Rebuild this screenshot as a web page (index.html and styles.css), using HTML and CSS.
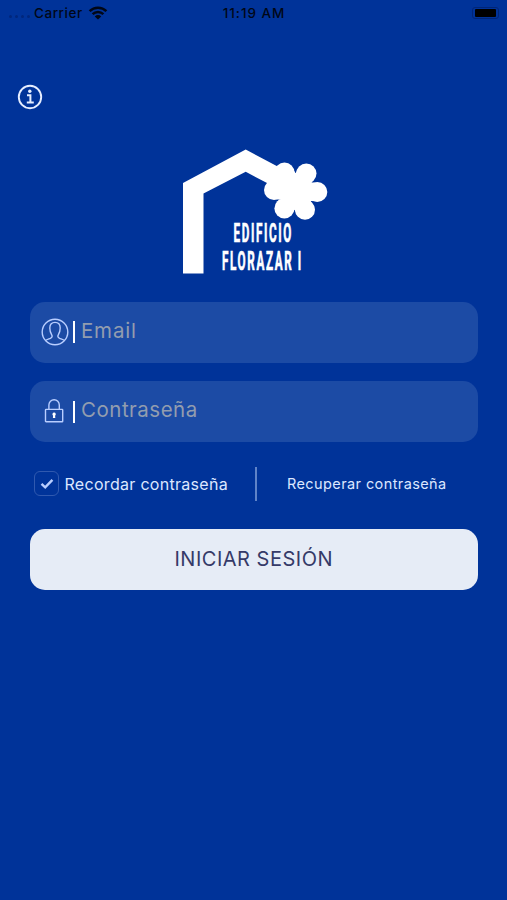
FILE: index.html
```
<!DOCTYPE html>
<html lang="es">
<head>
  <meta charset="UTF-8">
  <title>Edificio Florazar I</title>
  <link rel="stylesheet" href="styles.css">
</head>
<body>
  <div class="status-bar">
    <div class="carrier">
      <span class="signal"><i></i><i></i><i></i><i></i></span>
      <span class="carrier-name">Carrier</span>
      <svg class="wifi" width="20" height="14" viewBox="0 0 20 14">
        <path d="M1.6 5.2a12 12 0 0 1 16.8 0M4.6 8.2a7.8 7.8 0 0 1 10.8 0" fill="none" stroke="#000716" stroke-width="2.5"/>
        <path d="M10 13.6 6.8 10.4a4.6 4.6 0 0 1 6.4 0z" fill="#000716"/>
      </svg>
    </div>
    <div class="time">11:19 AM</div>
    <div class="battery"><span></span></div>
  </div>

  <div class="top">
    <svg class="info" width="26" height="26" viewBox="0 0 26 26" fill="none" stroke="#e6eeff">
      <circle cx="13" cy="13" r="11.2" stroke-width="1.9"/>
      <circle cx="12.8" cy="7.3" r="1.7" fill="#e6eeff" stroke="none"/>
      <path d="M10 11.2h3.4v7.2M9.8 18.6h7" stroke-width="2"/>
    </svg>
  </div>

  <svg class="logo" width="146" height="126" viewBox="0 0 146 126" fill="#fff">
    <path d="M0 124.5V34L62.7 .5 106 23.6 98 41.3 62.7 22.8 20.5 44.5V124.5z"/>
    <!-- flower: round petal tips joined to the centre -->
    <g>
      <circle cx="112" cy="42" r="16"/>
      <path d="M112 42 101.5 23.5M112 42 123.3 24.6M112 42 134.3 43M112 42 122 60.8M112 42 101.4 59.4M112 42 91 41" fill="none" stroke="#fff" stroke-width="18.5"/>
      <circle cx="101.5" cy="23.5" r="10"/>
      <circle cx="123.3" cy="24.6" r="10.2"/>
      <circle cx="134.3" cy="43" r="10"/>
      <circle cx="122" cy="60.8" r="10"/>
      <circle cx="101.4" cy="59.4" r="10"/>
      <circle cx="91" cy="41" r="10"/>
    </g>
    <g class="logo-text">
      <text transform="translate(50.5 92.7) scale(.45 1)">EDIFICIO</text>
      <text transform="translate(39 121) scale(.45 1)">FLORAZAR I</text>
    </g>
  </svg>

  <div class="login">
    <div class="field">
      <svg width="28" height="28" viewBox="0 0 28 28" fill="none" stroke="#b9ceff" stroke-width="1.4">
        <circle cx="14" cy="14" r="12.8"/>
        <path d="M4.4 22.6c1.5-1.4 3.3-1.6 5-2.3 1.8-.8 2.2-1.9 1.3-3.4C9.4 14.8 8.8 12.6 8.8 10c0-3.6 2-5.6 5.2-5.6s5.2 2 5.2 5.6c0 2.6-.6 4.8-1.9 6.9-.9 1.5-.5 2.6 1.3 3.4 1.7.7 3.5.9 5 2.3"/>
      </svg>
      <span class="bar"></span>
      <span class="placeholder email">Email</span>
    </div>
    <div class="field">
      <svg width="28" height="28" viewBox="0 0 28 28" fill="none" stroke="#b9ceff" stroke-width="1.4">
        <rect x="4.5" y="11.4" width="17.2" height="12.4" rx=".6"/>
        <path d="M7.9 11.2V7a5.2 5.2 0 0 1 10.4 0V11.2"/>
        <path d="M13.1 14.6a1.8 1.8 0 0 1 1 3.2l.2 2.2h-2.4l.2-2.2a1.8 1.8 0 0 1 1-3.2z" fill="#fff" stroke="none"/>
      </svg>
      <span class="bar"></span>
      <span class="placeholder password">Contraseña</span>
    </div>

    <div class="options">
      <span class="checkbox">
        <svg width="14" height="12" viewBox="0 0 14 12" fill="none" stroke="#b9ceff" stroke-width="2.4">
          <path d="M1.5 5.8 5.2 9.3 12.4 1.8"/>
        </svg>
      </span>
      <span class="remember">Recordar contraseña</span>
      <span class="divider"></span>
      <span class="recover">Recuperar contraseña</span>
    </div>

    <div class="submit"><span>INICIAR SESIÓN</span></div>
  </div>
</body>
</html>
```
FILE: styles.css
```
* { box-sizing: border-box; }
body { margin: 0; height: 900px; overflow: hidden; background: #003399; font-family: "Inter", "Liberation Sans", sans-serif; white-space: nowrap; }
svg { display: block; flex: none; }

.status-bar { display: grid; grid-template-columns: 1fr auto 1fr; align-items: center; height: 26px; padding: 0 8px 0 9px; color: #000716; font-size: 13.5px; font-weight: 500; }
.carrier { display: flex; align-items: center; }
.signal { display: flex; gap: 3px; width: 25px; padding-top: 6px; }
.signal i { width: 3px; height: 3px; border-radius: 50%; background: #00277c; }
.carrier-name { width: 49px; margin-right: 5px; letter-spacing: .55px; }
.time { letter-spacing: .95px; }
.battery { justify-self: end; width: 27px; height: 12px; padding: 1px 2px; border: 1px solid #002577; border-radius: 3px; }
.battery span { display: block; height: 8px; border-radius: 1px; background: #000; }

.top { height: 123px; padding: 58px 0 0 17px; }
.logo { margin-left: 183px; overflow: visible; }
.logo-text { font-family: "Roboto", sans-serif; font-size: 26px; font-weight: 700; letter-spacing: 3.6px; stroke: #fff; stroke-width: .7px; }

.login { display: flex; flex-direction: column; width: 447.5px; margin: 26.5px 0 0 30px; }
.field { display: flex; align-items: center; height: 61px; margin-bottom: 18.5px; padding-left: 11px; border-radius: 15px; background: #1c4ba5; }
.bar { width: 2px; height: 22px; margin: 0 6px 0 4px; background: #fff; }
.placeholder { color: #929daf; font-size: 20.5px; line-height: 24px; margin-top: -3px; }
.email { letter-spacing: .8px; }
.password { letter-spacing: .5px; }

.options { display: flex; align-items: center; height: 34px; margin: 6px 0 27.5px; padding-left: 4px; color: #dce7ff; }
.options span { flex: none; }
.checkbox { display: flex; align-items: center; justify-content: center; width: 25px; height: 25px; border: 1.5px solid #3059af; border-radius: 6px; }
.remember { width: 196px; padding-left: 5.5px; font-size: 16px; letter-spacing: .3px; }
.divider { width: 1.5px; height: 34px; margin-right: 30.5px; background: #5f83c8; }
.recover { font-size: 14.5px; letter-spacing: .4px; }

.submit { display: flex; align-items: center; justify-content: center; height: 61px; margin-top: .5px; padding-bottom: 1px; border-radius: 15px; background: #e6ecf6; color: #353a68; font-size: 20px; letter-spacing: .5px; }
```
